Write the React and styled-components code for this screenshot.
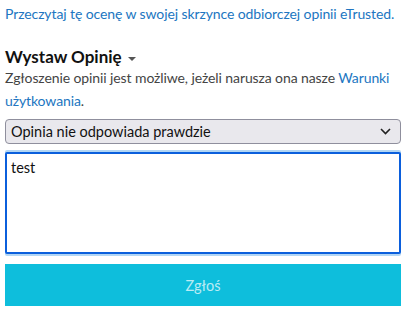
import React from 'react';
import styled, { createGlobalStyle } from 'styled-components';

const FONT = '"Lato", "Liberation Sans", sans-serif';

const GlobalStyle = createGlobalStyle`
  html, body {
    margin: 0;
    padding: 0;
    background: #ffffff;
  }
  body {
    font-family: ${FONT};
    font-size: 14px;
    color: #444;
  }
`;

const Page = styled.div`
  width: 396px;
  padding: 3px 7px 0 5px;
  display: flex;
  flex-direction: column;
`;

const Link = styled.a`
  color: #2176c1;
  text-decoration: none;
  cursor: pointer;
`;

const Intro = styled.p`
  margin: 0;
  line-height: 22px;
  font-size: 14px;
  letter-spacing: -0.1px;
  white-space: nowrap;
`;

const Heading = styled.h3`
  margin: 23px 0 0;
  font-size: 17px;
  font-weight: 700;
  color: #111;
  line-height: 18px;
  display: flex;
  align-items: center;
  gap: 6px;
`;

const Caret = styled.span`
  display: inline-block;
  width: 0;
  height: 0;
  border-left: 4px solid transparent;
  border-right: 4px solid transparent;
  border-top: 4px solid #555;
  margin-top: 3px;
`;

const Note = styled.p`
  margin: 0;
  line-height: 23px;
  font-size: 14px;
  letter-spacing: -0.1px;
`;

const SelectWrap = styled.div`
  position: relative;
  margin-top: 7px;
  width: 396px;
`;

const Select = styled.select`
  appearance: none;
  display: block;
  width: 100%;
  height: 25px;
  box-sizing: border-box;
  background: #e9e8ed;
  border: 1px solid #8f8f9d;
  border-radius: 4px;
  padding: 0 28px 0 5px;
  font-family: ${FONT};
  font-size: 14.5px;
  color: #111;
  outline: none;
`;

const Chevron = styled.svg`
  position: absolute;
  right: 10px;
  top: 9px;
  pointer-events: none;
`;

const TextArea = styled.textarea`
  display: block;
  margin-top: 8px;
  width: 396px;
  height: 102px;
  box-sizing: border-box;
  border: 2px solid #0b5fdc;
  border-radius: 2px;
  box-shadow: 0 -2px 0 #b3d6f4, 0 2px 0 #b3d6f4;
  padding: 5px 4px;
  resize: none;
  font-family: ${FONT};
  font-size: 14.5px;
  color: #111;
  outline: none;
`;

const SubmitButton = styled.button`
  margin-top: 10px;
  width: 396px;
  height: 42px;
  border: none;
  background: #0ebedc;
  color: rgba(255, 255, 255, 0.72);
  font-family: ${FONT};
  font-size: 14.5px;
  cursor: default;
`;

const App = () => {
  return (
    <>
      <GlobalStyle />
      <Page>
        <Intro>
          <Link>Przeczytaj tę ocenę w swojej skrzynce odbiorczej opinii eTrusted.</Link>
        </Intro>
        <Heading>
          Wystaw Opinię
          <Caret />
        </Heading>
        <Note>
          Zgłoszenie opinii jest możliwe, jeżeli narusza ona nasze <Link>Warunki użytkowania</Link>.
        </Note>
        <SelectWrap>
          <Select defaultValue="1">
            <option value="1">Opinia nie odpowiada prawdzie</option>
          </Select>
          <Chevron width="11" height="7" viewBox="0 0 11 7">
            <path d="M1 1l4.5 4.5L10 1" fill="none" stroke="#222" strokeWidth="1.6" />
          </Chevron>
        </SelectWrap>
        <TextArea defaultValue="test" />
        <SubmitButton disabled>Zgłoś</SubmitButton>
      </Page>
    </>
  );
};

export default App;
